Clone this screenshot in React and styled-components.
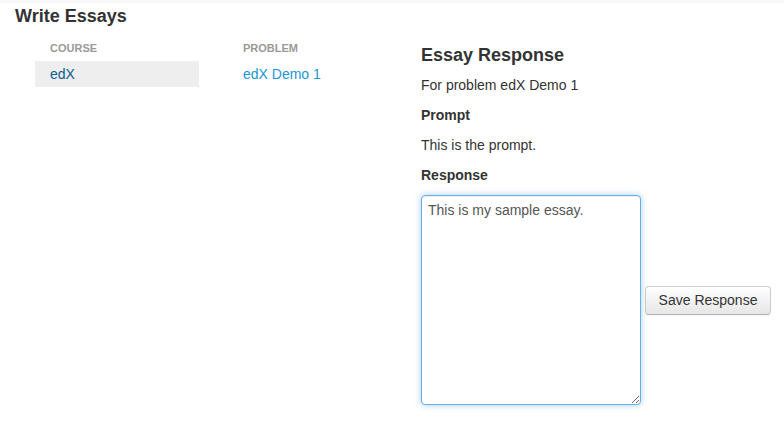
import React, { useEffect, useRef } from "react";
import styled, { createGlobalStyle } from "styled-components";

const Global = createGlobalStyle`
  html, body { margin: 0; padding: 0; background: #fff; }
  body { font-family: "Liberation Sans", Arial, sans-serif; color: #333; }
`;

const Page = styled.div`
  width: 784px;
  min-height: 430px;
  border-top: 3px solid #f7f7f7;
  box-sizing: border-box;
`;

const Title = styled.h1`
  margin: 3px 0 0 15px;
  font-size: 18px;
  line-height: 20px;
  font-weight: bold;
  color: #333;
`;

const Body = styled.div`
  display: flex;
  align-items: flex-start;
  padding-left: 35px;
`;

const Table = styled.div`
  display: grid;
  grid-template-columns: 164px 178px;
  column-gap: 29px;
  margin-top: 15px;
  width: 386px;
`;

const HeadCell = styled.div`
  padding: 0 15px;
  font-size: 11px;
  line-height: 14px;
  font-weight: bold;
  color: #999;
  text-transform: uppercase;
  height: 20px;
`;

const Cell = styled.div`
  padding: 0 15px;
  height: 26px;
  line-height: 26px;
  font-size: 14px;
  color: ${(p) => (p.$active ? "#0b5d8f" : "#1a96d6")};
  background: ${(p) => (p.$active ? "#eeeeee" : "transparent")};
  cursor: pointer;
`;

const Panel = styled.div`
  display: flex;
  flex-direction: column;
  padding-top: 19px;
`;

const PanelTitle = styled.h2`
  margin: 0 0 10px;
  font-size: 18px;
  line-height: 20px;
  font-weight: bold;
  color: #333;
`;

const Text = styled.p`
  margin: 0 0 10px;
  font-size: 14px;
  line-height: 20px;
  font-weight: ${(p) => (p.$bold ? "bold" : "normal")};
  color: #333;
`;

const ResponseRow = styled.div`
  display: flex;
  align-items: center;
  gap: 4px;
`;

const Essay = styled.textarea`
  box-sizing: border-box;
  width: 220px;
  height: 210px;
  padding: 4px 6px;
  margin: 0;
  font-family: "Liberation Sans", Arial, sans-serif;
  font-size: 14px;
  line-height: 20px;
  color: #555;
  border: 1px solid #66afe9;
  border-radius: 4px;
  outline: none;
  box-shadow: inset 0 1px 1px rgba(0, 0, 0, 0.075), 0 0 6px rgba(102, 175, 233, 0.6);
  resize: both;
`;

const Button = styled.button`
  box-sizing: border-box;
  width: 126px;
  height: 29px;
  padding: 0 12px;
  font-family: "Liberation Sans", Arial, sans-serif;
  font-size: 14px;
  color: #333;
  background: linear-gradient(to bottom, #ffffff, #e6e6e6);
  border: 1px solid #cccccc;
  border-bottom-color: #b3b3b3;
  border-radius: 4px;
  box-shadow: inset 0 1px 0 rgba(255, 255, 255, 0.2), 0 1px 2px rgba(0, 0, 0, 0.05);
  cursor: pointer;
`;

export default function App() {
  const ref = useRef(null);
  const essay = "This is my sample essay.";
  useEffect(() => {
    if (ref.current) {
      ref.current.focus();
      ref.current.setSelectionRange(essay.length, essay.length);
    }
  }, []);
  return (
    <>
      <Global />
      <Page>
        <Title>Write Essays</Title>
        <Body>
          <Table>
            <HeadCell>Course</HeadCell>
            <HeadCell>Problem</HeadCell>
            <Cell $active>edX</Cell>
            <Cell>edX Demo 1</Cell>
          </Table>
          <Panel>
            <PanelTitle>Essay Response</PanelTitle>
            <Text>For problem edX Demo 1</Text>
            <Text $bold>Prompt</Text>
            <Text>This is the prompt.</Text>
            <Text $bold>Response</Text>
            <ResponseRow>
              <Essay ref={ref} defaultValue={essay} />
              <Button>Save Response</Button>
            </ResponseRow>
          </Panel>
        </Body>
      </Page>
    </>
  );
}
